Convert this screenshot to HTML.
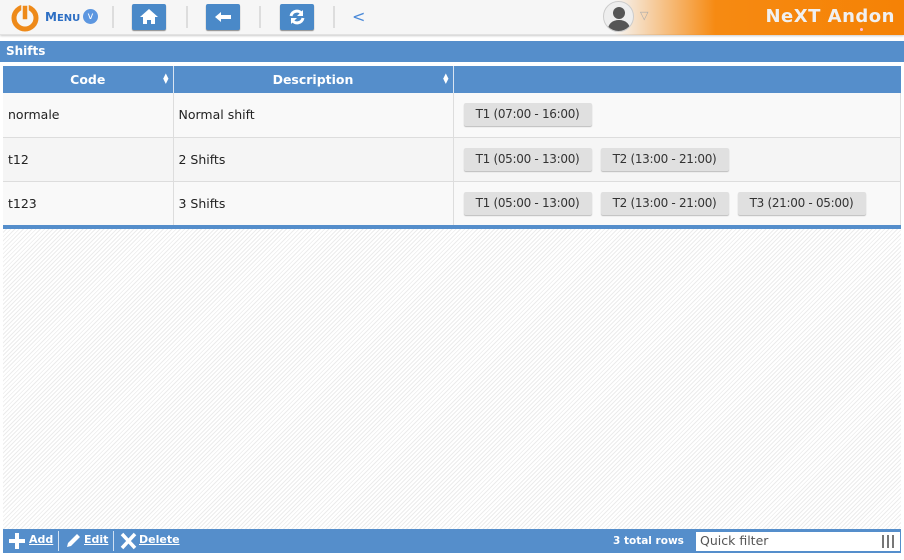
<!DOCTYPE html>
<html><head><meta charset="utf-8"><style>
*{margin:0;padding:0;box-sizing:border-box}
body{width:904px;height:560px;overflow:hidden;background:#fff;font-family:"DejaVu Sans","Liberation Sans",sans-serif;position:relative}
.top{position:absolute;left:0;top:0;width:904px;height:35px;background:#f6f6f6;border-bottom:1px solid #e2e2e2;box-shadow:0 1px 2px #ccc}
.orange{position:absolute;right:0;top:0;width:290px;height:35px;background:linear-gradient(90deg,rgba(245,130,10,0) 0%,#f68a12 35%,#f58205 100%)}
.brand{position:absolute;right:9px;top:6px;color:#f0f0f0;font-weight:bold;font-size:18px;letter-spacing:.5px}
.btn{position:absolute;top:4px;width:34px;height:26px;background:#4a89c8;border-radius:2px;box-shadow:0 1px 1px #888}
.sep{position:absolute;top:6px;width:2px;height:22px;background:#ddd}
.bar{position:absolute;left:0;top:41px;width:904px;height:21px;background:#558ecb;color:#fff;font-weight:bold;font-size:12px;padding:3px 6px}
.hatch{position:absolute;left:3px;top:229px;width:898px;height:300px;background:repeating-linear-gradient(135deg,#fff 0 2px,#ececec 2px 3px)}
table{position:absolute;left:3px;top:66px;width:898px;border-collapse:collapse;font-size:12.5px;color:#222;table-layout:fixed}
th{background:#558ecb;color:#fff;height:27px;font-size:12.5px;border-right:1px solid #d8e4f2;position:relative}
th .s{position:absolute;right:4px;top:8px;font-size:7px;line-height:5px}
td{height:44px;padding-left:5px;border-right:1px solid #ddd;border-bottom:1px solid #ddd;background:#f9f9f9;white-space:nowrap}
tr:nth-child(3) td{background:#f5f5f5}
.chip{display:inline-block;vertical-align:middle;background:#e0e0e0;border-radius:2px;box-shadow:0 1px 1px #bbb;height:23px;line-height:23px;width:128px;margin-left:5px;margin-right:4px;font-size:12px;letter-spacing:-0.3px;color:#333;text-align:center;white-space:nowrap;overflow:hidden}
.foot{position:absolute;left:3px;top:529px;width:898px;height:24px;background:#558ecb;color:#fff;font-size:12px}
.foot a{color:#fff;text-decoration:underline;font-weight:bold;position:absolute;top:4px;font-size:11px}
</style></head><body>
<div class="top">
 <svg style="position:absolute;left:11px;top:4px" width="28" height="28" viewBox="0 0 28 28"><circle cx="14" cy="14" r="11" fill="none" stroke="#ee8a1a" stroke-width="5"/><rect x="11" y="1" width="6" height="15" fill="#ee8a1a" stroke="#f6f6f6" stroke-width="1.5"/></svg>
 <div style="position:absolute;left:45px;top:10px;color:#2d6fc4;font-weight:bold;font-size:12px">M<span style="font-size:10px">ENU</span></div>
 <div style="position:absolute;left:83px;top:9px;width:15px;height:15px;border-radius:50%;background:#5d97e0;color:#fff;font-size:10px;text-align:center;line-height:15px">v</div>
 <div class="sep" style="left:112px"></div>
 <div class="btn" style="left:132px"><svg width="34" height="26"><path d="M17 5 L8 13 H11 V20 H15 V16 H19 V20 H23 V13 H26 Z" fill="#fff"/></svg></div>
 <div class="sep" style="left:186px"></div>
 <div class="btn" style="left:206px"><svg width="34" height="26"><path d="M9 13 L15 8 V11 H25 V15 H15 V18 Z" fill="#fff"/></svg></div>
 <div class="sep" style="left:259px"></div>
 <div class="btn" style="left:280px"><svg width="34" height="26"><path d="M11 12 A6 6 0 0 1 22 10" stroke="#fff" stroke-width="3" fill="none"/><path d="M23 6 V12 H17 Z" fill="#fff"/><path d="M23 14 A6 6 0 0 1 12 16" stroke="#fff" stroke-width="3" fill="none"/><path d="M11 20 V14 H17 Z" fill="#fff"/></svg></div>
 <div class="sep" style="left:333px"></div>
 <div style="position:absolute;left:352px;top:7px;color:#4a89d8;font-size:16px">&lt;</div>
 <div class="orange"><div class="brand">NeXT Andon</div><div style="position:absolute;right:41px;top:28px;width:3px;height:3px;border-radius:50%;background:#fbd"></div></div>
 <div style="position:absolute;left:603px;top:1px;width:31px;height:31px;border-radius:50%;background:#eee;border:1px solid #ccc;overflow:hidden"><svg width="31" height="31"><circle cx="15" cy="11" r="6" fill="#555"/><path d="M3 31 Q4 18 15 18 Q26 18 27 31 Z" fill="#555"/></svg></div>
 <div style="position:absolute;left:640px;top:9px;color:#aaa;font-size:11px">▽</div>
</div>
<div class="bar">Shifts</div>
<table>
<colgroup><col style="width:170px"><col style="width:280px"><col></colgroup>
<tr><th>Code<span class="s">▲<br>▼</span></th><th>Description<span class="s">▲<br>▼</span></th><th style="border-right:none"></th></tr>
<tr><td>normale</td><td>Normal shift</td><td><span class="chip">T1 (07:00 - 16:00)</span></td></tr>
<tr><td>t12</td><td>2 Shifts</td><td><span class="chip">T1 (05:00 - 13:00)</span><span class="chip">T2 (13:00 - 21:00)</span></td></tr>
<tr><td>t123</td><td>3 Shifts</td><td><span class="chip">T1 (05:00 - 13:00)</span><span class="chip">T2 (13:00 - 21:00)</span><span class="chip">T3 (21:00 - 05:00)</span></td></tr>
</table>
<div style="position:absolute;left:3px;top:225px;width:898px;height:4px;background:#558ecb"></div>
<div class="hatch"></div>
<div class="foot">
 <svg style="position:absolute;left:6px;top:4px" width="16" height="16"><path d="M6 0h4v6h6v4h-6v6h-4v-6h-6v-4h6z" fill="#fff"/></svg>
 <a style="left:26px">Add</a>
 <div style="position:absolute;left:55px;top:2px;width:1px;height:20px;background:#cfe0f2"></div>
 <svg style="position:absolute;left:61px;top:3px" width="18" height="18"><path d="M3 15 L4 11 L13 2 L16 5 L7 14 Z" fill="#fff"/></svg>
 <a style="left:81px">Edit</a>
 <div style="position:absolute;left:110px;top:2px;width:1px;height:20px;background:#cfe0f2"></div>
 <svg style="position:absolute;left:117px;top:3px" width="17" height="18"><path d="M2 2 L15 16 M15 2 L2 16" stroke="#fff" stroke-width="3.5"/></svg>
 <a style="left:136px">Delete</a>
 <div style="position:absolute;left:610px;top:6px;font-weight:bold;font-size:10.5px">3 total rows</div>
 <div style="position:absolute;left:693px;top:3px;width:204px;height:19px;background:#fff;color:#555;font-size:12.5px;padding:1px 4px">Quick filter
  <div style="position:absolute;right:4px;top:3px;width:14px;height:13px;background:repeating-linear-gradient(90deg,#777 0 2px,#fff 2px 5px)"></div></div>
</div>
</body></html>
